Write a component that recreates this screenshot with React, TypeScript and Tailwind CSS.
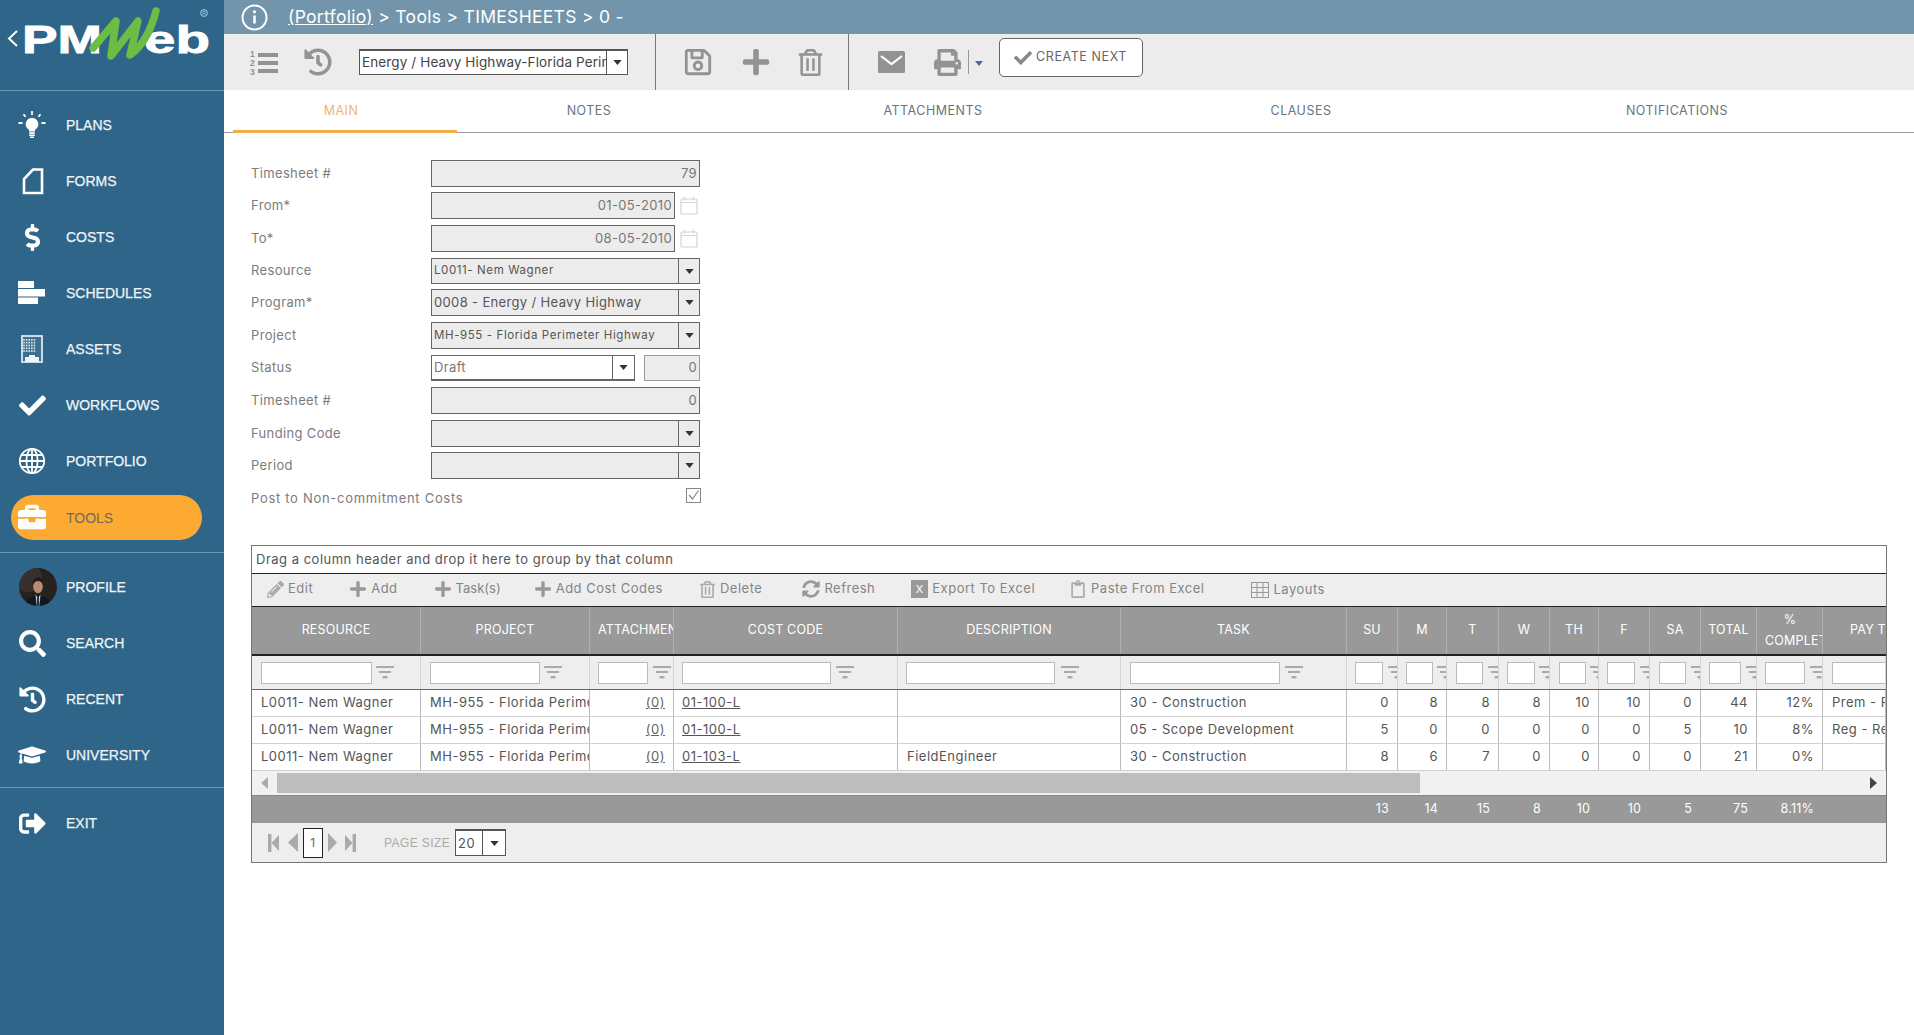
import React from "react";
import {
  FaBriefcase, FaCheck, FaDollarSign, FaGraduationCap, FaHistory, FaPencilAlt, FaPlus, FaPrint,
  FaRegClipboard, FaRegSave, FaRegTrashAlt, FaSearch, FaSignOutAlt, FaSyncAlt,
} from "react-icons/fa";

const COLS = "grid grid-cols-[169px_169px_84px_224px_223px_226px_51px_49px_52px_51px_49px_51px_51px_56px_66px_1fr]";

function Logo() {
  return (
    <svg viewBox="0 0 224 90" className="w-[224px] h-[90px] block">
      <polyline points="17,31 9,38.5 17,46" fill="none" stroke="#fff" strokeWidth="2" />
      <text x="22" y="52.5" fontFamily="Liberation Sans" fontWeight="700" fontSize="38" fill="#fff" stroke="#fff" strokeWidth="0.8" textLength="80" lengthAdjust="spacingAndGlyphs">PM</text>
      <text x="144" y="52.5" fontFamily="Liberation Sans" fontWeight="700" fontSize="38" fill="#fff" stroke="#fff" strokeWidth="0.8" textLength="66" lengthAdjust="spacingAndGlyphs">eb</text>
      <path d="M93 48 L116 21 L111 56 L138 21 L130 55 Q148 42 156 11" fill="none" stroke="#6cbd45" strokeWidth="7.5" strokeLinejoin="round" strokeLinecap="round" />
      <circle cx="204" cy="13" r="3.4" fill="none" stroke="#b9c9d4" strokeWidth="1" />
      <text x="204" y="15" textAnchor="middle" fontSize="5" fill="#b9c9d4" fontFamily="Liberation Sans">R</text>
    </svg>
  );
}

function Bulb() {
  return (
    <svg viewBox="0 0 28 28" className="w-[28px] h-[28px]" fill="#fff">
      <path d="M14 7a6.2 6.2 0 0 0-4 11c.9.8 1.2 1.6 1.2 2.4h5.6c0-.8.3-1.6 1.2-2.4A6.2 6.2 0 0 0 14 7z" />
      <rect x="11.2" y="21.2" width="5.6" height="1.6" />
      <rect x="11.2" y="23.4" width="5.6" height="1.6" />
      <rect x="12" y="25.5" width="4" height="1.5" />
      <path d="M14 0v4M5.5 3.2l2 2.6M22.5 3.2l-2 2.6M0.5 12h4M23.5 12h4" stroke="#fff" strokeWidth="1.8" />
    </svg>
  );
}
function Doc() {
  return (
    <svg viewBox="0 0 28 28" className="w-[28px] h-[28px]" fill="none" stroke="#fff" strokeWidth="2.6">
      <path d="M6 26V12L15 2.5H24V26z" strokeLinejoin="miter" />
    </svg>
  );
}
function Bars() {
  return (
    <svg viewBox="0 0 28 24" className="w-[28px] h-[24px]" fill="#fff">
      <rect x="0" y="0" width="16" height="7" />
      <rect x="0" y="8" width="27" height="7.5" />
      <rect x="0" y="16.5" width="20" height="6.5" />
    </svg>
  );
}
function Building() {
  const dots = [];
  for (let r = 0; r < 5; r++) for (let c = 0; c < 5; c++) dots.push(<rect key={`${r}-${c}`} x={5.2 + c * 2.6} y={4 + r * 2.8} width="1.6" height="1.7" fill="#dbe6ee" />);
  return (
    <svg viewBox="0 0 28 28" className="w-[28px] h-[28px]">
      <rect x="4" y="1" width="20" height="26" fill="#3c6f90" stroke="#dbe6ee" strokeWidth="1.8" />
      {dots}
      <path d="M7 27v-5h4v-2h6v2h4v5z" fill="#eef4f7" />
    </svg>
  );
}
function Globe() {
  return (
    <svg viewBox="0 0 28 28" className="w-[28px] h-[28px]" fill="none" stroke="#fff" strokeWidth="1.8">
      <circle cx="14" cy="14" r="12.2" />
      <ellipse cx="14" cy="14" rx="5.6" ry="12.2" />
      <path d="M14 2v24M2 14h24M3.8 8h20.4M3.8 20h20.4" />
    </svg>
  );
}
function Avatar() {
  return (
    <svg viewBox="0 0 38 38" className="w-[38px] h-[38px] rounded-full block shrink-0 ml-[12px]">
      <rect width="38" height="38" fill="#262220" />
      <circle cx="9" cy="10" r="14" fill="#38302c" />
      <path d="M6 38c1-7 6-10 13-11 7 1 12 4 13 11z" fill="#11161f" />
      <path d="M16.5 26.5l2.5 3.5 2.5-3.5 -1 11.5h-3z" fill="#c9cdd6" />
      <path d="M18.2 29h1.6l.8 9h-3.2z" fill="#22304f" />
      <ellipse cx="19" cy="18.5" rx="4.8" ry="6.8" fill="#b98a74" />
      <path d="M14 17c-1-5 2-7.5 5-7.5s6 2.500 5 7.500c-1-3-2.500-4-5-4s-4 1-5 4z" fill="#231a16" />
    </svg>
  );
}

type NavItem = { label: string; icon: React.ReactNode; active?: boolean };
function Nav({ item }: { item: NavItem }) {
  return (
    <div className="h-[56px] flex items-center">
      <div className={item.active ? "ml-[11px] w-[191px] h-[45px] rounded-full bg-[#fdaa32] flex items-center pl-[7px]" : "ml-[11px] w-[191px] h-[45px] flex items-center pl-[7px]"}>
        <div className="w-[28px] flex justify-center items-center">{item.icon}</div>
        <span className={item.active ? "ml-[20px] mt-[2px] text-[14px] text-[#6f6a58]" : "ml-[20px] text-[14px] text-[#eef4f8] [-webkit-text-stroke:0.25px_#eef4f8]"}>{item.label}</span>
      </div>
    </div>
  );
}

function Sidebar() {
  const main: NavItem[] = [
    { label: "PLANS", icon: <Bulb /> },
    { label: "FORMS", icon: <Doc /> },
    { label: "COSTS", icon: <FaDollarSign className="text-white text-[27px]" /> },
    { label: "SCHEDULES", icon: <Bars /> },
    { label: "ASSETS", icon: <Building /> },
    { label: "WORKFLOWS", icon: <FaCheck className="text-white text-[27px]" /> },
    { label: "PORTFOLIO", icon: <Globe /> },
    { label: "TOOLS", icon: <FaBriefcase className="text-white text-[28px]" />, active: true },
  ];
  const second: NavItem[] = [
    { label: "PROFILE", icon: <Avatar /> },
    { label: "SEARCH", icon: <FaSearch className="text-white text-[27px]" /> },
    { label: "RECENT", icon: <FaHistory className="text-white text-[27px]" /> },
    { label: "UNIVERSITY", icon: <FaGraduationCap className="text-white text-[28px]" /> },
  ];
  return (
    <aside className="w-[224px] shrink-0 bg-[#2f6588] font-['Liberation_Sans',sans-serif] min-h-[1035px]">
      <div className="h-[91px] border-b border-[#6d97b2]"><Logo /></div>
      <div className="pt-[6px] pb-[7px] border-b border-[#6d97b2]">
        {main.map((i) => <Nav key={i.label} item={i} />)}
      </div>
      <div className="pt-[6px] pb-[4px] border-b border-[#6d97b2]">
        {second.map((i) => <Nav key={i.label} item={i} />)}
      </div>
      <div className="pt-[7px]">
        <Nav item={{ label: "EXIT", icon: <FaSignOutAlt className="text-white text-[27px]" /> }} />
      </div>
    </aside>
  );
}

function Caret({ className = "" }: { className?: string }) {
  return (
    <svg viewBox="0 0 10 6" className={`w-[9px] h-[5px] ${className}`}>
      <polygon points="0,0 10,0 5,6" fill="#333" />
    </svg>
  );
}

function Tri({ dir, color, w, h }: { dir: "left" | "right"; color: string; w: string; h: string }) {
  return (
    <svg viewBox="0 0 10 18" preserveAspectRatio="none" className={`${w} ${h} shrink-0`}>
      <polygon points={dir === "left" ? "10,0 10,18 0,9" : "0,0 0,18 10,9"} fill={color} />
    </svg>
  );
}

function Step({ dir }: { dir: "first" | "last" }) {
  return (
    <svg viewBox="0 0 11 18" className="w-[11px] h-[18px] shrink-0" fill="#aaa">
      {dir === "first" ? (
        <>
          <rect x="0" y="0" width="3.4" height="18" />
          <polygon points="11,1 11,17 3.400,9" />
        </>
      ) : (
        <>
          <rect x="7.6" y="0" width="3.4" height="18" />
          <polygon points="0,1 0,17 7.600,9" />
        </>
      )}
    </svg>
  );
}

function Toolbar() {
  return (
    <div className="h-[56px] bg-[#ececec] flex items-center pl-[26px] text-[#939393]">
      <svg viewBox="0 0 28 27" className="w-[28px] h-[27px]" fill="#929292">
        <text x="0" y="8" fontSize="8.5" fontWeight="700" fontFamily="Liberation Sans">1</text>
        <text x="0" y="17" fontSize="8.5" fontWeight="700" fontFamily="Liberation Sans">2</text>
        <text x="0" y="26" fontSize="8.5" fontWeight="700" fontFamily="Liberation Sans">3</text>
        <rect x="8" y="4" width="20" height="4" />
        <rect x="8" y="12" width="20" height="4" />
        <rect x="8" y="20" width="20" height="4" />
      </svg>
      <FaHistory className="ml-[26px] text-[28px]" />
      <div className="ml-[27px] w-[269px] h-[26px] bg-white border border-[#555] border-t-2 flex items-center text-[13.5px] tracking-[0.12px] text-[#444]">
        <span className="flex-1 pl-[2px] overflow-hidden whitespace-nowrap">Energy / Heavy Highway-Florida Perimeter Highway</span>
        <span className="w-[21px] h-full border-l border-[#555] flex items-center justify-center shrink-0"><Caret /></span>
      </div>
      <div className="ml-[27px] self-stretch w-px bg-[#777]" />
      <FaRegSave className="ml-[27px] text-[30px]" />
      <FaPlus className="ml-[28px] text-[30px]" />
      <FaRegTrashAlt className="ml-[26px] text-[27px]" />
      <div className="ml-[24px] self-stretch w-px bg-[#777]" />
      <svg viewBox="0 0 27 22" className="ml-[29px] w-[27px] h-[22px]">
        <rect width="27" height="22" rx="1.5" fill="#929292" />
        <polyline points="3,5 13.5,13 24,5" fill="none" stroke="#fff" strokeWidth="2.2" />
      </svg>
      <FaPrint className="ml-[29px] text-[27px]" />
      <div className="ml-[7px] w-px h-[24px] bg-[#999]" />
      <svg viewBox="0 0 10 6" className="ml-[6px] w-[8px] h-[5px] mt-[3px]"><polygon points="0,0 10,0 5,6" fill="#4a6da0" /></svg>
      <button className="ml-[16px] mb-[9px] w-[144px] h-[39px] bg-white border border-[#666] rounded-[5px] flex items-center pl-[14px] text-[12.5px] text-[#666] tracking-[0.6px]">
        <FaCheck className="text-[#888] text-[18px] mr-[4px]" />CREATE NEXT
      </button>
    </div>
  );
}

function Tabs() {
  return (
    <div className="h-[43px] border-b border-[#999] flex pl-[9px] text-[12.5px] text-[#66757f] tracking-[0.5px]">
      <div className="w-[224px] h-[43px] border-b-[3px] border-[#f2ae4a] flex items-center justify-center pr-[8px] pt-[3px] text-[#eeb27a]">MAIN</div>
      <div className="w-[264px] flex items-center justify-center">NOTES</div>
      <div className="w-[424px] flex items-center justify-center">ATTACHMENTS</div>
      <div className="w-[312px] flex items-center justify-center">CLAUSES</div>
      <div className="w-[440px] flex items-center justify-center">NOTIFICATIONS</div>
    </div>
  );
}

function Calendar() {
  return (
    <svg viewBox="0 0 18 19" className="ml-[5px] w-[18px] h-[19px]" fill="none" stroke="#d4d4d4" strokeWidth="1.2">
      <rect x="1" y="3" width="16" height="15" rx="1" />
      <path d="M1 6.5h16M4.5 0.5v4M13.5 0.5v4" />
    </svg>
  );
}

const BOX = "bg-[#ececec] border border-[#666] flex items-center text-[#777]";

function Label({ children }: { children: React.ReactNode }) {
  return <div className="w-[180px] text-[#7c7c7c] shrink-0">{children}</div>;
}
function Pick({ text, small }: { text?: string; small?: boolean }) {
  return (
    <div className={`${BOX} w-[269px] h-full`}>
      <span className={small ? "flex-1 pl-[2px] text-[11.5px] tracking-[0.6px] text-[#555] whitespace-nowrap overflow-hidden" : "flex-1 pl-[2px] text-[13px] text-[#555] whitespace-nowrap overflow-hidden"}>{text}</span>
      <span className="w-[21px] h-full border-l border-[#666] flex items-center justify-center shrink-0"><Caret /></span>
    </div>
  );
}

function Form() {
  return (
    <div className="pt-[27px] text-[13px] tracking-[0.35px]">
      <div className="flex items-center h-[27px] mb-[5px]">
        <Label>Timesheet #</Label>
        <div className={`${BOX} w-[269px] h-full justify-end pr-[2px]`}>79</div>
      </div>
      <div className="flex items-center h-[27px] mb-[6px]">
        <Label>From*</Label>
        <div className={`${BOX} w-[244px] h-full justify-end pr-[2px]`}>01-05-2010</div>
        <Calendar />
      </div>
      <div className="flex items-center h-[27px] mb-[6px]">
        <Label>To*</Label>
        <div className={`${BOX} w-[244px] h-full justify-end pr-[2px]`}>08-05-2010</div>
        <Calendar />
      </div>
      <div className="flex items-center h-[26px] mb-[5px]">
        <Label>Resource</Label><Pick text="L0011- Nem Wagner" small />
      </div>
      <div className="flex items-center h-[27px] mb-[6px]">
        <Label>Program*</Label><Pick text="0008 - Energy / Heavy Highway" />
      </div>
      <div className="flex items-center h-[27px] mb-[6px]">
        <Label>Project</Label><Pick text="MH-955 - Florida Perimeter Highway" small />
      </div>
      <div className="flex items-center h-[26px] mb-[6px]">
        <Label>Status</Label>
        <div className="w-[204px] h-full bg-white border border-[#666] border-b-2 flex items-center text-[#777]">
          <span className="flex-1 pl-[2px]">Draft</span>
          <span className="w-[22px] h-full border-l border-[#666] flex items-center justify-center"><Caret /></span>
        </div>
        <div className="ml-[9px] w-[56px] h-full bg-[#ececec] border border-[#999] flex items-center justify-end pr-[2px] text-[#777]">0</div>
      </div>
      <div className="flex items-center h-[27px] mb-[6px]">
        <Label>Timesheet #</Label>
        <div className={`${BOX} w-[269px] h-full justify-end pr-[2px]`}>0</div>
      </div>
      <div className="flex items-center h-[27px] mb-[5px]">
        <Label>Funding Code</Label><Pick />
      </div>
      <div className="flex items-center h-[27px] mb-[9px]">
        <Label>Period</Label><Pick />
      </div>
      <div className="flex items-start h-[20px]">
        <Label><span className="block whitespace-nowrap leading-[20px] tracking-[0.7px]">Post to Non-commitment Costs</span></Label>
        <svg viewBox="0 0 15 15" className="ml-[255px] w-[15px] h-[15px]" fill="none">
          <rect x="0.5" y="0.5" width="14" height="14" stroke="#888" />
          <polyline points="3,7 6.5,11 12.5,2.5" stroke="#888" strokeWidth="1.2" />
        </svg>
      </div>
    </div>
  );
}

function Funnel() {
  return (
    <svg viewBox="0 0 18 15" className="w-[18px] h-[15px] shrink-0" fill="#aaa">
      <rect x="0" y="1" width="18" height="2" />
      <rect x="3" y="6" width="12" height="2" />
      <rect x="6.5" y="11" width="5" height="2.4" />
    </svg>
  );
}

const filterCells = [
  { pl: "pl-[9px]", w: "w-[111px]", gap: "ml-[4px]" },
  { pl: "pl-[9px]", w: "w-[110px]", gap: "ml-[4px]" },
  { pl: "pl-[8px]", w: "w-[50px]", gap: "ml-[5px]" },
  { pl: "pl-[8px]", w: "w-[149px]", gap: "ml-[5px]" },
  { pl: "pl-[8px]", w: "w-[149px]", gap: "ml-[6px]" },
  { pl: "pl-[9px]", w: "w-[150px]", gap: "ml-[5px]" },
  { pl: "pl-[8px]", w: "w-[28px]", gap: "ml-[5px]" },
  { pl: "pl-[8px]", w: "w-[27px]", gap: "ml-[4px]" },
  { pl: "pl-[9px]", w: "w-[27px]", gap: "ml-[5px]" },
  { pl: "pl-[8px]", w: "w-[28px]", gap: "ml-[4px]" },
  { pl: "pl-[9px]", w: "w-[27px]", gap: "ml-[4px]" },
  { pl: "pl-[8px]", w: "w-[28px]", gap: "ml-[5px]" },
  { pl: "pl-[9px]", w: "w-[27px]", gap: "ml-[5px]" },
  { pl: "pl-[8px]", w: "w-[32px]", gap: "ml-[5px]" },
  { pl: "pl-[8px]", w: "w-[40px]", gap: "ml-[5px]" },
  { pl: "pl-[9px]", w: "w-[60px]", gap: "ml-[4px]" },
];

const rows = [
  ["L0011- Nem Wagner", "MH-955 - Florida Perimeter Highway", "(0)", "01-100-L", "", "30 - Construction", "0", "8", "8", "8", "10", "10", "0", "44", "12%", "Prem - Premium"],
  ["L0011- Nem Wagner", "MH-955 - Florida Perimeter Highway", "(0)", "01-100-L", "", "05 - Scope Development", "5", "0", "0", "0", "0", "0", "5", "10", "8%", "Reg - Regular"],
  ["L0011- Nem Wagner", "MH-955 - Florida Perimeter Highway", "(0)", "01-103-L", "FieldEngineer", "30 - Construction", "8", "6", "7", "0", "0", "0", "0", "21", "0%", ""],
];
const totals = ["", "", "", "", "", "", "13", "14", "15", "8", "10", "10", "5", "75", "8.11%", ""];
const headers = ["RESOURCE", "PROJECT", "ATTACHMENTS", "COST CODE", "DESCRIPTION", "TASK", "SU", "M", "T", "W", "TH", "F", "SA", "TOTAL"];

function ToolItem({ icon, text, className = "" }: { icon: React.ReactNode; text: string; className?: string }) {
  return (
    <div className={`flex items-center gap-[4px] whitespace-nowrap ${className}`}>
      {icon}
      <span>{text}</span>
    </div>
  );
}

function Grid() {
  return (
    <div className="mt-[37px] w-[1636px] border border-[#777] text-[13px] tracking-[0.5px] overflow-hidden">
      <div className="h-[28px] flex items-center pl-[4px] text-[#555] border-b border-[#222]">Drag a column header and drop it here to group by that column</div>
      <div className="h-[33px] pb-[2px] bg-[#eeeeee] flex items-center pl-[15px] gap-[36px] text-[#858585] border-b border-[#222]">
        <ToolItem icon={<FaPencilAlt className="text-[#aaa] text-[17px]" />} text="Edit" />
        <ToolItem icon={<FaPlus className="text-[#999] text-[18px]" />} text="Add" />
        <ToolItem icon={<FaPlus className="text-[#999] text-[18px]" />} text="Task(s)" className="tracking-[0px]" />
        <ToolItem icon={<FaPlus className="text-[#999] text-[18px]" />} text="Add Cost Codes" className="-ml-[3px]" />
        <ToolItem icon={<FaRegTrashAlt className="text-[#aaa] text-[17px]" />} text="Delete" />
        <ToolItem icon={<FaSyncAlt className="text-[#999] text-[18px]" />} text="Refresh" className="ml-[4px]" />
        <ToolItem icon={<span className="w-[17px] h-[18px] bg-[#999] text-white text-[11px] flex items-center justify-center">X</span>} text="Export To Excel" />
        <ToolItem icon={<FaRegClipboard className="text-[#aaa] text-[18px]" />} text="Paste From Excel" className="-ml-[2px]" />
        <div className="ml-[11px] mt-[1px]">
          <ToolItem
            icon={
              <svg viewBox="0 0 18 16" className="w-[18px] h-[16px]" fill="none" stroke="#999" strokeWidth="1">
                <rect x="0.5" y="0.5" width="17" height="15" />
                <path d="M6 0.5v15M12 0.5v15M0.5 5.5h17M0.5 10.5h17" />
              </svg>
            }
            text="Layouts"
          />
        </div>
      </div>
      <div className={`${COLS} h-[49px] bg-[#999] text-white text-[12.5px] tracking-[0.2px] border-b-2 border-[#222]`}>
        {headers.map((h) => (
          <div key={h} className={h === "ATTACHMENTS" ? "border-r border-[#b0b0b0] flex items-center pl-[8px] overflow-hidden whitespace-nowrap" : "border-r border-[#b0b0b0] flex items-center justify-center overflow-hidden whitespace-nowrap"}>{h}</div>
        ))}
        <div className="border-r border-[#b0b0b0] pl-[8px] overflow-hidden whitespace-nowrap leading-[21px] pt-[2px]">
          <div className="w-[50px] text-center">%</div>COMPLETE
        </div>
        <div className="flex items-center pl-[27px] overflow-hidden whitespace-nowrap">PAY TYPE</div>
      </div>
      <div className={`${COLS} h-[34px] bg-[#eeeeee] border-b border-[#666]`}>
        {filterCells.map((c, i) => (
          <div key={i} className={`${c.pl} border-r border-[#d4d4d4] flex items-center overflow-hidden`}>
            <div className={`${c.w} h-[22px] shrink-0 bg-white border border-[#bbb]`} />
            <span className={c.gap}><Funnel /></span>
          </div>
        ))}
      </div>
      {rows.map((r, ri) => (
        <div key={ri} className={`${COLS} h-[27px] bg-white border-b border-[#d0d0d0] text-[#555]`}>
          {r.map((v, i) => {
            const num = i >= 6 && i <= 14;
            const cls =
              i === 2
                ? "border-r border-[#bbb] flex items-center justify-end pr-[8px] underline text-[#666]"
                : i === 3
                ? "border-r border-[#bbb] flex items-center pl-[8px] underline"
                : num
                ? "border-r border-[#bbb] flex items-center justify-end pr-[8px]"
                : "border-r border-[#bbb] flex items-center pl-[9px] overflow-hidden whitespace-nowrap";
            return <div key={i} className={cls}>{v}</div>;
          })}
        </div>
      ))}
      <div className="h-[24px] bg-[#f1f1f1] flex items-center pl-[9px] pr-[9px]">
        <Tri dir="left" color="#aaa" w="w-[7px]" h="h-[12px]" />
        <div className="ml-[9px] w-[1143px] h-[20px] bg-[#bdbdbd]" />
        <div className="ml-auto"><Tri dir="right" color="#444" w="w-[7px]" h="h-[12px]" /></div>
      </div>
      <div className={`${COLS} h-[28px] bg-[#999] text-white text-[12.5px] tracking-[0.2px] border-t border-[#888]`}>
        {totals.map((t, i) => (
          <div key={i} className="flex items-center justify-end pr-[9px]">{t}</div>
        ))}
      </div>
      <div className="h-[39px] bg-[#eeeeee] flex items-center pl-[16px] text-[#999]">
        <Step dir="first" />
        <div className="ml-[9px]"><Tri dir="left" color="#aaa" w="w-[10px]" h="h-[19px]" /></div>
        <div className="ml-[5px] w-[20px] h-[30px] bg-white border border-[#222] flex items-center justify-center text-[#666] text-[12px]">1</div>
        <div className="ml-[5px]"><Tri dir="right" color="#aaa" w="w-[9px]" h="h-[19px]" /></div>
        <div className="ml-[8px]"><Step dir="last" /></div>
        <span className="ml-[28px] text-[12px] text-[#aaa] font-['Liberation_Sans',sans-serif] tracking-[0.4px]">PAGE SIZE</span>
        <div className="ml-[5px] w-[51px] h-[27px] bg-white border border-[#555] border-t-2 flex items-center text-[13px] text-[#555]">
          <span className="w-[27px] pl-[2px] pt-[2px] border-r border-[#555] h-full flex items-center">20</span>
          <span className="flex-1 flex items-center justify-center"><Caret /></span>
        </div>
      </div>
    </div>
  );
}

export default function App() {
  return (
    <div className="flex w-[1914px] h-[1035px] overflow-hidden bg-white font-['Inter',sans-serif]">
      <Sidebar />
      <main className="flex-1 min-w-0">
        <div className="h-[34px] bg-[#7295ab] flex items-center pl-[17px] text-white text-[17.5px] tracking-[0.3px]">
          <svg viewBox="0 0 27 27" className="w-[27px] h-[27px]" fill="none" stroke="#fff">
            <circle cx="13.5" cy="13.5" r="12" strokeWidth="2" />
            <path d="M13.5 11.5v8" strokeWidth="2.6" />
            <circle cx="13.5" cy="7.8" r="1.6" fill="#fff" stroke="none" />
          </svg>
          <span className="ml-[20px] whitespace-nowrap"><span className="underline">(Portfolio)</span> &gt; Tools &gt; TIMESHEETS &gt; 0 -</span>
        </div>
        <Toolbar />
        <Tabs />
        <div className="pl-[27px]">
          <Form />
          <Grid />
        </div>
      </main>
    </div>
  );
}
